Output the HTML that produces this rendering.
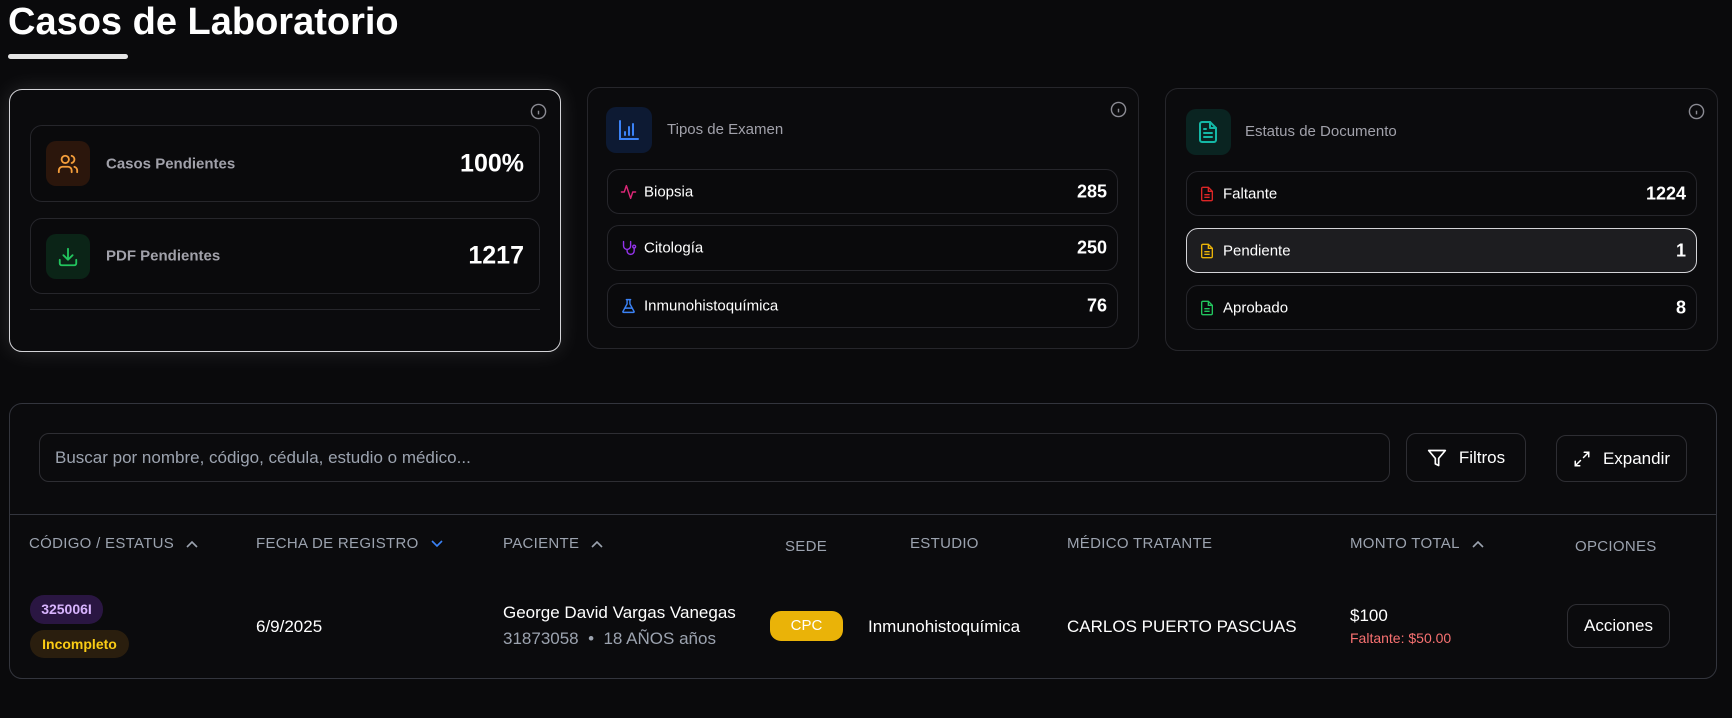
<!DOCTYPE html>
<html><head><meta charset="utf-8"><style>
*{box-sizing:border-box;margin:0;padding:0}
body{width:1732px;height:718px;background:#0a0a0c;font-family:"Liberation Sans",Arial,sans-serif;color:#fff;position:relative;overflow:hidden}
.a{position:absolute}
.card{position:absolute;border:1px solid #26262b;border-radius:13px;background:#0b0b0d}
.item{position:absolute;border:1px solid #26262b;border-radius:12px;background:#0a0a0c}
.info{position:absolute;width:17px;height:17px}
.lbl{position:absolute;font-size:15px;color:#fff;top:50%;transform:translateY(-50%)}
.val{position:absolute;font-weight:bold;font-size:18px;right:10px;top:50%;transform:translateY(-50%)}
.ic{position:absolute;top:50%;transform:translateY(-50%)}
.th{position:absolute;font-size:15px;color:#9ca3af;letter-spacing:.3px;top:535px;display:flex;align-items:center;gap:12px}
.btn{position:absolute;border:1px solid #2e2e33;border-radius:10px;font-size:17px;display:flex;align-items:center;justify-content:center;gap:12px}
</style></head><body>
<div class="a" style="left:8px;top:1px;font-size:38px;font-weight:bold;">Casos de Laboratorio</div>
<div class="a" style="left:8px;top:54px;width:120px;height:5px;border-radius:3px;background:#e5e5e5"></div>

<!-- card 1 -->
<div class="card" style="left:9px;top:89px;width:552px;height:263px;border-color:#d4d4d8;box-shadow:0 0 22px rgba(255,255,255,.12)"></div>
<svg class="info" style="left:530px;top:103px" viewBox="0 0 24 24" fill="none" stroke="#8b8b93" stroke-width="2"><circle cx="12" cy="12" r="10"/><path d="M12 16v-5M12 8h.01"/></svg>
<div class="item" style="left:30px;top:125px;width:510px;height:77px">
 <div class="a" style="left:15px;top:15px;width:44px;height:45px;border-radius:10px;background:#2b160c"></div>
 <svg class="a" style="left:26px;top:27px" width="22" height="22" viewBox="0 0 24 24" fill="none" stroke="#f59e3b" stroke-width="2" stroke-linecap="round"><path d="M16 21v-2a4 4 0 0 0-4-4H6a4 4 0 0 0-4 4v2"/><circle cx="9" cy="7" r="4"/><path d="M22 21v-2a4 4 0 0 0-3-3.87M16 3.13a4 4 0 0 1 0 7.75"/></svg>
 <div class="lbl" style="left:75px;font-weight:bold;color:#a1a1aa">Casos Pendientes</div>
 <div class="val" style="font-size:25px;right:15px">100%</div>
</div>
<div class="item" style="left:30px;top:218px;width:510px;height:76px">
 <div class="a" style="left:15px;top:15px;width:44px;height:45px;border-radius:10px;background:#0b2417"></div>
 <svg class="a" style="left:26px;top:27px" width="22" height="22" viewBox="0 0 24 24" fill="none" stroke="#22c55e" stroke-width="2" stroke-linecap="round" stroke-linejoin="round"><path d="M21 15v4a2 2 0 0 1-2 2H5a2 2 0 0 1-2-2v-4M7 10l5 5 5-5M12 15V3"/></svg>
 <div class="lbl" style="left:75px;font-weight:bold;color:#a1a1aa">PDF Pendientes</div>
 <div class="val" style="font-size:25px;right:15px">1217</div>
</div>
<div class="a" style="left:30px;top:309px;width:510px;height:1px;background:#26262b"></div>

<!-- card 2 -->
<div class="card" style="left:587px;top:87px;width:552px;height:262px"></div>
<svg class="info" style="left:1110px;top:101px" viewBox="0 0 24 24" fill="none" stroke="#8b8b93" stroke-width="2"><circle cx="12" cy="12" r="10"/><path d="M12 16v-5M12 8h.01"/></svg>
<div class="a" style="left:606px;top:107px;width:46px;height:46px;border-radius:10px;background:#0d1a33"></div>
<svg class="a" style="left:617px;top:118px" width="24" height="24" viewBox="0 0 24 24" fill="none" stroke="#3b82f6" stroke-width="2" stroke-linecap="round"><path d="M3 3v18h18M8 17v-3M12 17V9M16 17V6"/></svg>
<div class="a" style="left:667px;top:121px;font-size:15px;color:#a1a1aa">Tipos de Examen</div>
<div class="item" style="left:607px;top:169px;width:511px;height:45px">
 <svg class="ic" style="left:12px" width="17" height="17" viewBox="0 0 24 24" fill="none" stroke="#db2777" stroke-width="2" stroke-linecap="round" stroke-linejoin="round"><path d="M22 12h-4l-3 9L9 3l-3 9H2"/></svg>
 <div class="lbl" style="left:36px">Biopsia</div><div class="val">285</div>
</div>
<div class="item" style="left:607px;top:225px;width:511px;height:46px">
 <svg class="ic" style="left:12px" width="17" height="17" viewBox="0 0 24 24" fill="none" stroke="#9333ea" stroke-width="2" stroke-linecap="round"><path d="M5 3v6a5 5 0 0 0 10 0V3M10 14v2a5 5 0 0 0 10 0v-3"/><circle cx="20" cy="10" r="2"/></svg>
 <div class="lbl" style="left:36px">Citología</div><div class="val">250</div>
</div>
<div class="item" style="left:607px;top:283px;width:511px;height:45px">
 <svg class="ic" style="left:12px" width="17" height="17" viewBox="0 0 24 24" fill="none" stroke="#3b82f6" stroke-width="2" stroke-linecap="round" stroke-linejoin="round"><path d="M9 3h6M10 3v6L4 20a1 1 0 0 0 1 1h14a1 1 0 0 0 1-1L14 9V3M7 15h10"/></svg>
 <div class="lbl" style="left:36px">Inmunohistoquímica</div><div class="val">76</div>
</div>

<!-- card 3 -->
<div class="card" style="left:1165px;top:88px;width:553px;height:263px"></div>
<svg class="info" style="left:1688px;top:103px" viewBox="0 0 24 24" fill="none" stroke="#8b8b93" stroke-width="2"><circle cx="12" cy="12" r="10"/><path d="M12 16v-5M12 8h.01"/></svg>
<div class="a" style="left:1186px;top:109px;width:45px;height:46px;border-radius:10px;background:#0a2421"></div>
<svg class="a" style="left:1196px;top:120px" width="24" height="24" viewBox="0 0 24 24" fill="none" stroke="#14b8a6" stroke-width="2" stroke-linecap="round" stroke-linejoin="round"><path d="M14 2H6a2 2 0 0 0-2 2v16a2 2 0 0 0 2 2h12a2 2 0 0 0 2-2V8z"/><path d="M14 2v6h6M16 13H8M16 17H8M10 9H8"/></svg>
<div class="a" style="left:1245px;top:123px;font-size:15px;color:#a1a1aa">Estatus de Documento</div>
<div class="item" style="left:1186px;top:171px;width:511px;height:45px">
 <svg class="ic" style="left:12px" width="16" height="16" viewBox="0 0 24 24" fill="none" stroke="#dc2626" stroke-width="2"><path d="M14 2H6a2 2 0 0 0-2 2v16a2 2 0 0 0 2 2h12a2 2 0 0 0 2-2V8z"/><path d="M14 2v6h6M16 13H8M16 17H8"/></svg>
 <div class="lbl" style="left:36px">Faltante</div><div class="val">1224</div>
</div>
<div class="item" style="left:1186px;top:228px;width:511px;height:45px;background:#1d1d20;border-color:#d4d4d8">
 <svg class="ic" style="left:12px" width="16" height="16" viewBox="0 0 24 24" fill="none" stroke="#eab308" stroke-width="2"><path d="M14 2H6a2 2 0 0 0-2 2v16a2 2 0 0 0 2 2h12a2 2 0 0 0 2-2V8z"/><path d="M14 2v6h6M16 13H8M16 17H8"/></svg>
 <div class="lbl" style="left:36px">Pendiente</div><div class="val">1</div>
</div>
<div class="item" style="left:1186px;top:285px;width:511px;height:45px">
 <svg class="ic" style="left:12px" width="16" height="16" viewBox="0 0 24 24" fill="none" stroke="#22c55e" stroke-width="2"><path d="M14 2H6a2 2 0 0 0-2 2v16a2 2 0 0 0 2 2h12a2 2 0 0 0 2-2V8z"/><path d="M14 2v6h6M16 13H8M16 17H8"/></svg>
 <div class="lbl" style="left:36px">Aprobado</div><div class="val">8</div>
</div>

<!-- table card -->
<div class="card" style="left:9px;top:403px;width:1708px;height:276px;border-color:#33353d"></div>
<div class="a" style="left:39px;top:433px;width:1351px;height:49px;border:1px solid #2e2e33;border-radius:10px;font-size:17px;color:#9ca3af;padding:14px 15px">Buscar por nombre, código, cédula, estudio o médico...</div>
<div class="btn" style="left:1406px;top:433px;width:120px;height:49px"><svg width="20" height="20" viewBox="0 0 24 24" fill="none" stroke="#fff" stroke-width="2" stroke-linejoin="round"><path d="M22 3H2l8 9.46V19l4 2v-8.54z"/></svg>Filtros</div>
<div class="btn" style="left:1556px;top:435px;width:131px;height:47px"><svg width="18" height="18" viewBox="0 0 24 24" fill="none" stroke="#fff" stroke-width="2" stroke-linecap="round"><path d="M15 3h6v6M21 3l-7 7M9 21H3v-6M3 21l7-7"/></svg>Expandir</div>
<div class="a" style="left:10px;top:514px;width:1706px;height:1px;background:#33353d"></div>

<div class="th" style="left:29px">CÓDIGO / ESTATUS <svg width="12" height="8" viewBox="0 0 12 8" fill="none" stroke="#9ca3af" stroke-width="1.6"><path d="M1 7l5-5 5 5"/></svg></div>
<div class="th" style="left:256px">FECHA DE REGISTRO <svg width="12" height="8" viewBox="0 0 12 8" fill="none" stroke="#3b82f6" stroke-width="1.6"><path d="M1 1l5 5 5-5"/></svg></div>
<div class="th" style="left:503px">PACIENTE <svg width="12" height="8" viewBox="0 0 12 8" fill="none" stroke="#9ca3af" stroke-width="1.6"><path d="M1 7l5-5 5 5"/></svg></div>
<div class="th" style="left:785px;top:538px">SEDE</div>
<div class="th" style="left:910px">ESTUDIO</div>
<div class="th" style="left:1067px">MÉDICO TRATANTE</div>
<div class="th" style="left:1350px">MONTO TOTAL <svg width="12" height="8" viewBox="0 0 12 8" fill="none" stroke="#9ca3af" stroke-width="1.6"><path d="M1 7l5-5 5 5"/></svg></div>
<div class="th" style="left:1575px;top:538px">OPCIONES</div>

<div class="a" style="left:30px;top:595px;width:73px;height:29px;border-radius:14px;background:#2a1642;color:#d8b4fe;font-size:14px;font-weight:bold;text-align:center;line-height:29px">325006I</div>
<div class="a" style="left:30px;top:630px;width:99px;height:28px;border-radius:14px;background:#2a1e0e;color:#facc15;font-size:14px;font-weight:bold;text-align:center;line-height:28px">Incompleto</div>
<div class="a" style="left:256px;top:617px;font-size:17px">6/9/2025</div>
<div class="a" style="left:503px;top:603px;font-size:17px">George David Vargas Vanegas</div>
<div class="a" style="left:503px;top:629px;font-size:17px;color:#9ca3af">31873058 &nbsp;•&nbsp; 18 AÑOS años</div>
<div class="a" style="left:770px;top:611px;width:73px;height:30px;border-radius:11px;background:#eab308;color:#fff;font-size:15px;text-align:center;line-height:30px">CPC</div>
<div class="a" style="left:868px;top:617px;font-size:17px">Inmunohistoquímica</div>
<div class="a" style="left:1067px;top:617px;font-size:17px">CARLOS PUERTO PASCUAS</div>
<div class="a" style="left:1350px;top:606px;font-size:17px">$100</div>
<div class="a" style="left:1350px;top:630px;font-size:14px;color:#f87171">Faltante: $50.00</div>
<div class="btn" style="left:1567px;top:604px;width:103px;height:44px">Acciones</div>
</body></html>
